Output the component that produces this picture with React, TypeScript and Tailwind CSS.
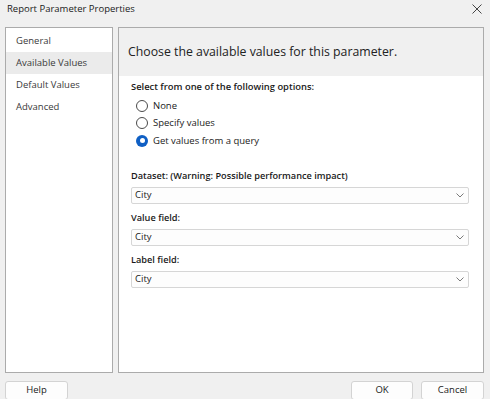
import { useState } from 'react';

const PAGES = ['General', 'Available Values', 'Default Values', 'Advanced'];

const OPTIONS = ['None', 'Specify values', 'Get values from a query'];

function Radio({ checked, label, onClick }: { checked: boolean; label: string; onClick: () => void }) {
  return (
    <button onClick={onClick} className="flex items-center h-[17.5px] text-left">
      {checked ? (
        <span className="w-[12px] h-[12px] rounded-full bg-[#0f5fc4] flex items-center justify-center">
          <span className="w-[5px] h-[5px] rounded-full bg-white" />
        </span>
      ) : (
        <span className="w-[12px] h-[12px] rounded-full border border-[#4a4a4a] bg-white" />
      )}
      <span className="ml-[5px] text-[9.5px] text-[#1a1a1a]">{label}</span>
    </button>
  );
}

function Combo({ value }: { value: string }) {
  return (
    <div className="h-[17px] mt-[2.5px] mr-[14px] border border-[#d6d6d6] bg-[#fdfdfd] rounded-[2px] flex items-center justify-between pl-[3px] pr-[4px]">
      <span className="text-[9.5px] text-[#1a1a1a]">{value}</span>
      <svg width="8" height="5" viewBox="0 0 8 5" fill="none">
        <path d="M0.5 0.5l3.5 3.5L7.5 0.5" stroke="#7a7a7a" strokeWidth="1" />
      </svg>
    </div>
  );
}

export default function App() {
  const [page, setPage] = useState('Available Values');
  const [option, setOption] = useState(2);

  return (
    <div
      className="h-[399px] w-[490px] overflow-hidden bg-[#f0f0f0] flex flex-col text-[#1a1a1a]"
      style={{ fontFamily: '"Open Sans", "Noto Sans", Arial, sans-serif' }}
    >
      <div className="h-[27px] shrink-0 flex items-center justify-between pl-[7px] pr-[8px]">
        <span className="text-[9.5px] -mt-[9px]">Report Parameter Properties</span>
        <svg width="10" height="10" viewBox="0 0 10 10" className="-mt-[10px]">
          <path d="M0.5 0.5l9 9M9.5 0.5l-9 9" stroke="#444" strokeWidth="1" />
        </svg>
      </div>

      <div className="flex shrink-0 h-[346px] pl-[5px] pr-[6px] gap-[5px]">
        <aside className="w-[108px] bg-white border border-[#ababab] pt-[2px] flex flex-col">
          {PAGES.map(p => (
            <button
              key={p}
              onClick={() => setPage(p)}
              className={[
                'block w-full h-[22px] shrink-0 text-left pl-[10px] text-[9.5px] text-[#3a3a3a]',
                page === p ? 'bg-[#ebebeb]' : '',
              ].join(' ')}
            >
              {p}
            </button>
          ))}
        </aside>

        <section className="flex-1 bg-white border border-[#ababab] flex flex-col">
          <div className="h-[48px] shrink-0 bg-[#f0f0f0] flex items-center pl-[9px]">
            <h1 className="text-[12.3px] text-[#222]">Choose the available values for this parameter.</h1>
          </div>
          <div className="pl-[12px] pt-[3px]">
            <p className="text-[9.4px] font-semibold h-[17px] flex items-center">Select from one of the following options:</p>
            <div className="flex flex-col pl-[5px] mt-[1px]">
              {OPTIONS.map((o, i) => (
                <Radio key={o} label={o} checked={option === i} onClick={() => setOption(i)} />
              ))}
            </div>

            <p className="text-[9.2px] font-semibold h-[17px] flex items-center mt-[18px]">
              Dataset: (Warning: Possible performance impact)
            </p>
            <Combo value="City" />

            <p className="text-[9.2px] font-semibold h-[17px] flex items-center mt-[5.5px]">Value field:</p>
            <Combo value="City" />

            <p className="text-[9.2px] font-semibold h-[17px] flex items-center mt-[5.5px]">Label field:</p>
            <Combo value="City" />
          </div>
        </section>
      </div>

      <div className="flex shrink-0 pl-[5px] pr-[6px] mt-[8px]">
        <button className="w-[63px] h-[19px] bg-[#fdfdfd] border border-[#d3d3d3] rounded-[3px] text-[9.5px]">Help</button>
        <div className="flex-1" />
        <button className="w-[62px] h-[19px] bg-[#fdfdfd] border border-[#d3d3d3] rounded-[3px] text-[9.5px]">OK</button>
        <button className="w-[63px] h-[19px] ml-[8px] bg-[#fdfdfd] border border-[#d3d3d3] rounded-[3px] text-[9.5px]">Cancel</button>
      </div>
    </div>
  );
}
